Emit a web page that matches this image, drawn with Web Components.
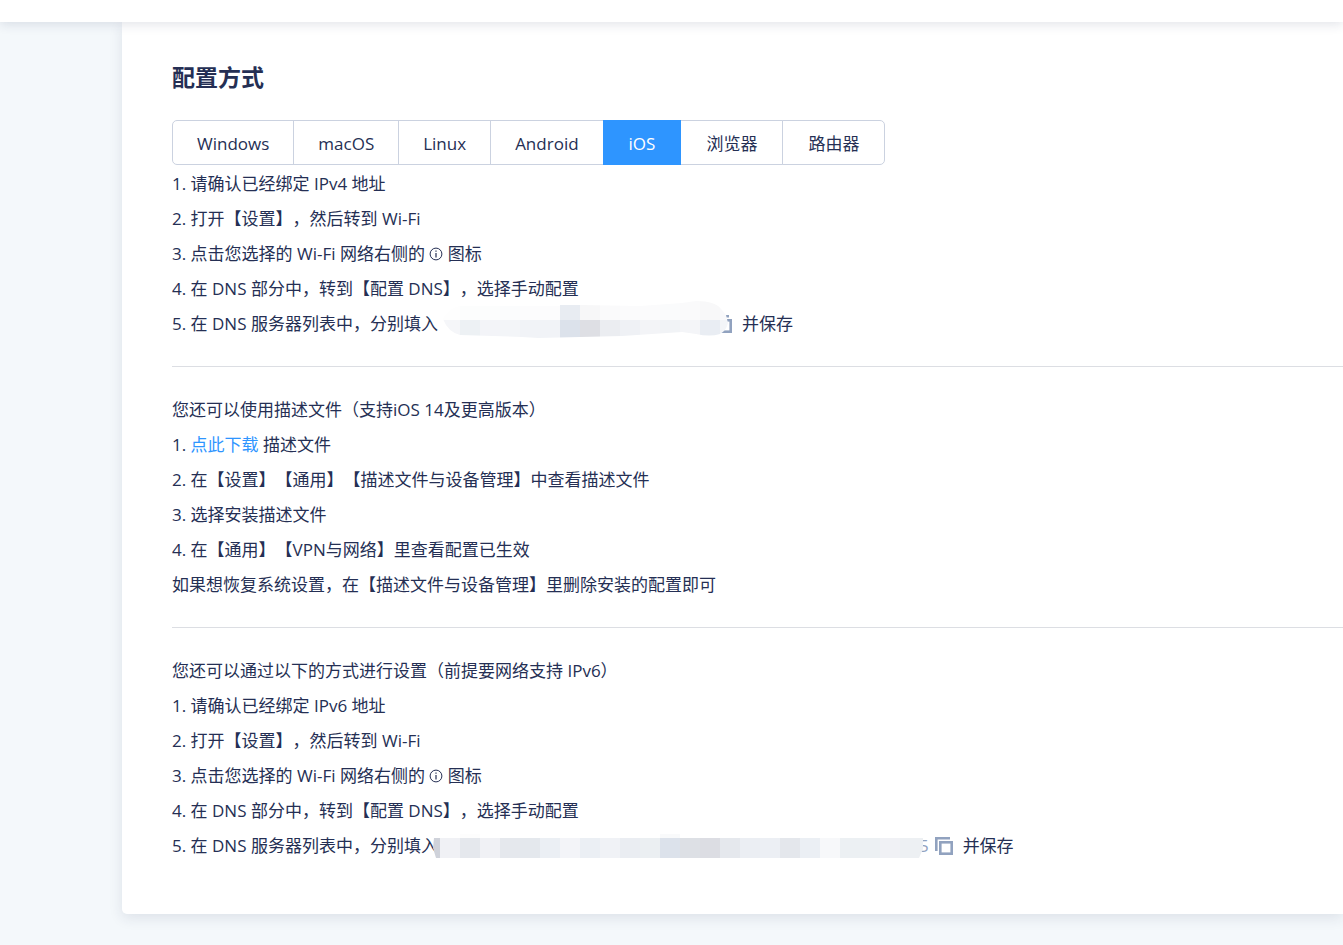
<!DOCTYPE html>
<html lang="zh-CN">
<head>
<meta charset="utf-8">
<meta name="viewport" content="width=device-width, initial-scale=1">
<title>配置方式</title>
<style>
html,body{margin:0;min-height:100%}
body{background:#f4f8fb;color:#252f54;font:17px/35px "Open Sans","Noto Sans CJK SC",sans-serif;text-spacing-trim:space-all;overflow-x:hidden}
</style>
</head>
<body>
<setup-page></setup-page>
<script>
function define(name, html, init) {
  const template = document.createElement('template');
  template.innerHTML = html;
  customElements.define(name, class extends HTMLElement {
    constructor() {
      super();
      this.attachShadow({mode: 'open'}).append(template.content.cloneNode(true));
      if (init) init(this);
    }
  });
}

define('top-bar', `<style>
:host{display:block;height:22px;background:#fff;box-shadow:0 2px 12px rgba(37,47,84,.14);position:relative;z-index:2}
</style><slot></slot>`);

define('content-card', `<style>
:host{display:block;background:#fff;border-radius:0 0 0 5px;box-shadow:0 4px 14px rgba(37,47,84,.11);padding:35px 0 51px 50px}
</style><slot></slot>`);

define('platform-tabs', `<style>
:host{display:flex}
nav{display:flex;height:45px}
button{box-sizing:border-box;margin:0 0 0 -1px;padding:2px 25px 0;border:1px solid #cbd2e0;background:#fff;color:#252f54;font:inherit;white-space:nowrap;cursor:pointer}
button:first-child{margin-left:0;border-radius:5px 0 0 5px}
button:last-child{border-radius:0 5px 5px 0}
button[aria-pressed=true]{background:#2e95ff;border-color:#2e95ff;color:#fff;position:relative}
button:lang(en){padding:2px 24px 0}
</style><nav aria-label="平台"><button type="button" lang="en">Windows</button><button type="button" lang="en">macOS</button><button type="button" lang="en">Linux</button><button type="button" lang="en">Android</button><button type="button" aria-pressed="true">iOS</button><button type="button">浏览器</button><button type="button">路由器</button></nav>`);

define('step-section', `<style>
:host{display:block}
:host([divided]){border-top:1px solid #dcdee3;margin-top:25px;padding-top:25px}
</style><slot></slot>`);

define('step-line', `<style>
:host{display:block;height:35px;white-space:nowrap}
::slotted(a){color:#2e95ff;text-decoration:none}
</style><slot></slot>`);

define('info-icon', `<style>
:host{display:inline-block;width:14px;height:14px;vertical-align:-1px}
svg{display:block}
</style><svg width="14" height="14" viewBox="0 0 14 14" fill="none" stroke="#252f54" role="img" aria-label="信息"><circle cx="7" cy="7" r="5.9"/><path d="M7 6v4.5M7 3.5v1.3" stroke-width="1.2"/></svg>`);

define('copy-button', `<style>
:host{display:inline-block;vertical-align:-3px}
button{display:block;margin:0;padding:0;border:0;background:none;cursor:pointer}
svg{display:block}
</style><button type="button" aria-label="复制"><svg width="18" height="18" viewBox="0 0 18 18" fill="none" stroke="#91a2bf" stroke-width="2.6"><path d="M1.3 14V1.3H15"/><rect x="5.3" y="5.3" width="11.4" height="11.4"/></svg></button>`);

define('masked-address', `<style>
:host{display:inline-block;position:relative;vertical-align:middle}
svg{display:block}
</style><svg aria-hidden="true" shape-rendering="crispEdges"></svg>`, host => {
  const svg = host.shadowRoot.querySelector('svg');
  const short = host.getAttribute('kind') === 'v4';
  const cell = (x, y, w, h, c) => `<rect x="${x}" y="${y}" width="${w}" height="${h}" fill="${c}"/>`;
  if (short) {
    host.style.cssText = 'width:286px;height:38px;margin:-10px -14px 0 4px';
    const top = ['#fefefe','#fcfdfd','#fcfdfd','#fbfcfd','#fcfcfd','#fcfcfd','#e8ecf2','#f7f7f8','#fafafb','#fbfbfc','#fbfbfc','#fafbfc','#fafafb','#f8f8f9','#f9f9fb'];
    const low = ['#f5f6f9','#edf1f4','#f3f4f8','#f3f5f8','#f1f3f7','#f1f3f7','#dce2eb','#dedfe4','#ebedf1','#eff1f5','#f3f4f7','#f1f3f6','#f4f5f8','#e9edf3','#f3f5f8'];
    const xs = i => i ? i * 20 - 2 : -2;
    svg.setAttribute('width', 286);
    svg.setAttribute('height', 38);
    svg.innerHTML = '<clipPath id="v4"><path d="M1 18Q6 7 18 5H118V4H138L198 5 240 2 254 0Q274 0 280 9L284 14 286 22Q284 30 278 33 268 36 254 33L240 31 180 35 138 36 96 37 80 36 18 34Q6 31 1 18Z"/></clipPath><g clip-path="url(#v4)">' +
      top.map((c, i) => cell(xs(i), 0, 20, 19, c)).join('') + low.map((c, i) => cell(xs(i), 19, 20, 19, c)).join('') + '</g>';
  } else {
    host.style.cssText = 'width:490px;height:24px;margin:-3px -4px 0 -5px';
    const colors = ['#cfd2da','#f0f1f5','#e5e8ed','#f0f1f5','#e5e8ed','#e4e8ed','#ebeff4','#f3f4f8','#ebeff4','#f0f2f6','#eaedf2','#ebeff2','#dce2eb','#dde0e5','#dcdde3','#e5e8ed','#ebeef3','#eceff4','#e4e7ec','#ebeff4','#f7f8fa','#ecf0f3','#ecf0f3','#f0f1f5','#edf0f3'];
    svg.setAttribute('width', 490);
    svg.setAttribute('height', 24);
    svg.innerHTML = '<clipPath id="v6"><path d="M27 0H247V4H490V15L486 24H3L0 14 1 4H27Z"/></clipPath><g clip-path="url(#v6)">' + cell(27,0,20,4,'#fdfdfd') + cell(227,0,20,4,'#f9fafb') +
      colors.map((c, i) => cell(i ? i * 20 - 13 : 0, 4, i ? 20 : 7, 20, c)).join('') + cell(487,4,3,20,'#edf0f3') + '</g>';
  }
});

define('masked-tail', `<style>
:host{color:#91a2bf;margin-right:6px}
</style><slot></slot>`);

define('setup-page', `<style>
:host{display:block;min-height:100vh}
content-card{margin-left:122px}
h2{margin:0 0 23px;font-size:23px;line-height:40px;font-weight:700}
platform-tabs{margin-bottom:1px}
.after{margin-left:10px}
</style>
<top-bar></top-bar>
<main><content-card>
<h2>配置方式</h2>
<platform-tabs></platform-tabs>
<step-section>
<step-line>1. 请确认已经绑定 IPv4 地址</step-line>
<step-line>2. 打开【设置】，然后转到 Wi-Fi</step-line>
<step-line>3. 点击您选择的 Wi-Fi 网络右侧的 <info-icon></info-icon> 图标</step-line>
<step-line>4. 在 DNS 部分中，转到【配置 DNS】，选择手动配置</step-line>
<step-line>5. 在 DNS 服务器列表中，分别填入<masked-address kind="v4"></masked-address><copy-button></copy-button><span class="after">并保存</span></step-line>
</step-section>
<step-section divided>
<step-line>您还可以使用描述文件（支持iOS 14及更高版本）</step-line>
<step-line>1. <a href="#profile">点此下载</a> 描述文件</step-line>
<step-line>2. 在【设置】【通用】【描述文件与设备管理】中查看描述文件</step-line>
<step-line>3. 选择安装描述文件</step-line>
<step-line>4. 在【通用】【VPN与网络】里查看配置已生效</step-line>
<step-line>如果想恢复系统设置，在【描述文件与设备管理】里删除安装的配置即可</step-line>
</step-section>
<step-section divided>
<step-line>您还可以通过以下的方式进行设置（前提要网络支持 IPv6）</step-line>
<step-line>1. 请确认已经绑定 IPv6 地址</step-line>
<step-line>2. 打开【设置】，然后转到 Wi-Fi</step-line>
<step-line>3. 点击您选择的 Wi-Fi 网络右侧的 <info-icon></info-icon> 图标</step-line>
<step-line>4. 在 DNS 部分中，转到【配置 DNS】，选择手动配置</step-line>
<step-line>5. 在 DNS 服务器列表中，分别填入<masked-address kind="v6"></masked-address><masked-tail>5</masked-tail><copy-button></copy-button><span class="after">并保存</span></step-line>
</step-section>
</content-card></main>`);
</script>
</body>
</html>
